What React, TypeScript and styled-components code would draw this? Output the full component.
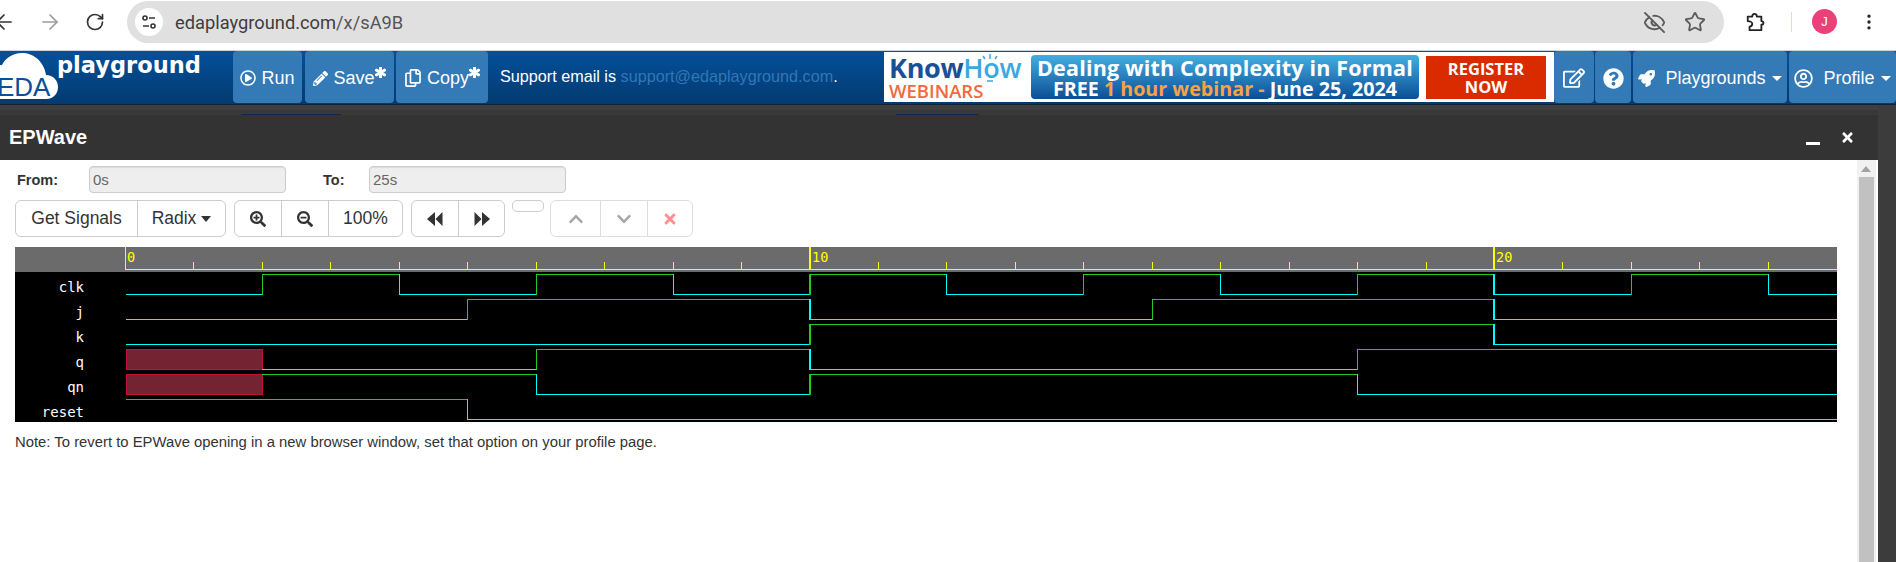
import styled, { createGlobalStyle } from "styled-components";
import { ArrowLeft, ArrowRight, RotateCw, Star, EyeOff, EllipsisVertical } from "lucide-react";
import {
  FaRegPlayCircle,
  FaPencilAlt,
  FaRegCopy,
  FaAsterisk,
  FaRegEdit,
  FaQuestionCircle,
  FaRocket,
  FaRegUserCircle,
  FaSearchPlus,
  FaSearchMinus,
  FaChevronUp,
  FaChevronDown,
  FaTimes,
} from "react-icons/fa";

const GlobalStyle = createGlobalStyle`
  html, body {
    margin: 0;
    height: 100%;
    overflow: hidden;
    background: #fff;
    font-family: "Liberation Sans", Arial, sans-serif;
  }
  #root {
    height: 100%;
  }
`;

const Page = styled.div`
  height: 100%;
  display: flex;
  flex-direction: column;
`;

/* browser chrome */
const BrowserBar = styled.div`
  height: 51px;
  flex: none;
  box-sizing: border-box;
  display: flex;
  align-items: flex-start;
  background: #fff;
  border-bottom: 1px solid #c9d3dc;
  color: #333;
`;

const NavIcon = styled.div<{ $left: number; $color?: string; $size?: number }>`
  margin: ${(p) => 22 - (p.$size || 20) / 2}px 0 0 ${(p) => p.$left}px;
  width: ${(p) => p.$size || 20}px;
  height: ${(p) => p.$size || 20}px;
  flex: none;
  color: ${(p) => p.$color || "#333"};
  svg {
    display: block;
    width: 100%;
    height: 100%;
  }
`;

const AddressBar = styled.div`
  width: 1597px;
  height: 42px;
  margin: 1px 0 0 22px;
  flex: none;
  display: flex;
  align-items: center;
  box-sizing: border-box;
  padding: 0 18px 0 8px;
  border-radius: 21px;
  background: #e0e0e0;
`;

const TuneBadge = styled.div`
  width: 28px;
  height: 28px;
  border-radius: 50%;
  background: #fff;
  display: flex;
  align-items: center;
  justify-content: center;
`;

const Url = styled.span`
  margin-left: 12px;
  font-family: "Roboto", "Liberation Sans", sans-serif;
  font-size: 18.3px;
  color: #3d3d3d;
  flex: 1;
  b {
    font-weight: 400;
    color: #555;
  }
`;

const BarAction = styled.div`
  margin-left: 18px;
  color: #5b5b5b;
  display: flex;
`;

const Divider = styled.div`
  width: 1px;
  height: 20px;
  margin: 12px 0 0 26px;
  background: #cfe8c9;
`;

const Avatar = styled.div`
  width: 25px;
  height: 25px;
  margin: 9px 0 0 20px;
  border-radius: 50%;
  background: #ec407a;
  color: #fff;
  font-size: 13px;
  display: flex;
  align-items: center;
  justify-content: center;
`;

/* site navbar */
const Navbar = styled.nav`
  height: 54px;
  flex: none;
  box-sizing: border-box;
  display: flex;
  align-items: stretch;
  padding-bottom: 1px;
  background: linear-gradient(#04509b, #033a6f);
  border-bottom: 1px solid #0b2438;
`;

const Logo = styled.svg`
  width: 233px;
  height: 52px;
  flex: none;
`;

const NavButton = styled.button<{ $w: number; $gap?: number }>`
  width: ${(p) => p.$w}px;
  margin-left: ${(p) => p.$gap || 0}px;
  flex: none;
  padding: 2px 0 0;
  border: none;
  border-radius: 4px;
  background: #337ab7;
  color: #fff;
  font-family: inherit;
  font-size: 18px;
  display: flex;
  align-items: center;
  justify-content: center;
  gap: 5px;
`;

const Star2 = styled(FaAsterisk)`
  width: 11px;
  height: 11px;
  margin: 0 0 12px -5px;
  stroke: currentColor;
  stroke-width: 50;
`;

const Caret = styled.span`
  width: 0;
  height: 0;
  margin-left: 1px;
  border-top: 5px solid #fff;
  border-left: 5px solid transparent;
  border-right: 5px solid transparent;
`;

const Support = styled.div`
  margin: 0 0 1px 12px;
  align-self: center;
  font-size: 16.2px;
  color: #fff;
  white-space: nowrap;
  a {
    color: #2f78b9;
    text-decoration: none;
  }
`;

const Banner = styled.div`
  width: 670px;
  margin: 1px 0 1px auto;
  flex: none;
  box-sizing: border-box;
  display: flex;
  align-items: center;
  padding-left: 5px;
  background: #fff;
  font-family: "Open Sans", "Liberation Sans", sans-serif;
`;

const KnowHow = styled.div`
  width: 142px;
  flex: none;
  position: relative;
`;

const KnowWord = styled.div`
  font-size: 27px;
  line-height: 27px;
  font-weight: 700;
  letter-spacing: -0.3px;
  color: #1b4f96;
  span {
    color: #3aa9dd;
    font-weight: 600;
  }
`;

const Rays = styled.svg`
  position: absolute;
  left: 91px;
  top: 0;
  width: 20px;
  height: 30px;
`;

const Webinars = styled.div`
  font-size: 18.5px;
  line-height: 20px;
  font-weight: 600;
  color: #f2693a;
`;

const BannerPanel = styled.div`
  width: 388px;
  height: 44px;
  flex: none;
  box-sizing: border-box;
  padding-top: 2px;
  border-radius: 4px;
  background: linear-gradient(#43aee0, #0c4e97);
  color: #fff;
  font-weight: 700;
  text-align: center;
  font-size: 21.5px;
  letter-spacing: 0.2px;
  line-height: 21px;
  white-space: nowrap;
  span {
    color: #f8a245;
  }
`;

const PanelSecond = styled.div`
  font-size: 19.7px;
  letter-spacing: 0;
`;

const RegisterBox = styled.div`
  width: 120px;
  height: 43px;
  margin-left: 7px;
  flex: none;
  box-sizing: border-box;
  padding-top: 2px;
  background: #d92a00;
  color: #fff;
  font-size: 16.5px;
  line-height: 18px;
  font-weight: 700;
  text-align: center;
  display: flex;
  flex-direction: column;
  justify-content: center;
`;

/* dark page behind the modal */
const Workspace = styled.div`
  flex: 1;
  min-height: 0;
  display: flex;
  background: #3c3c3c;
`;

const Modal = styled.div`
  width: 1878px;
  flex: none;
  display: flex;
  flex-direction: column;
`;

const BackStrip = styled.div`
  height: 10px;
  flex: none;
  box-sizing: border-box;
  display: flex;
  align-items: flex-end;
  background: linear-gradient(#3f3f3f, #3f3f3f 45%, #363636 50%, #3a3a3a);
`;

const BackTab = styled.div<{ $left: number; $w: number }>`
  width: ${(p) => p.$w}px;
  height: 1px;
  margin-left: ${(p) => p.$left}px;
  background: #0e2a48;
`;

const ModalHeader = styled.div`
  height: 45px;
  flex: none;
  display: flex;
  align-items: center;
  padding: 0 24px 0 9px;
  background: #333;
  color: #fff;
`;

const ModalTitle = styled.div`
  flex: 1;
  font-size: 20px;
  font-weight: 700;
`;

const MinimizeMark = styled.div`
  width: 14px;
  height: 3px;
  margin: 11px 21px 0 0;
  background: #fff;
`;

const CloseMark = styled(FaTimes)`
  width: 13px;
  height: 15px;
`;

const ModalBody = styled.div`
  flex: 1;
  min-height: 0;
  display: flex;
  background: #fff;
`;

const Content = styled.div`
  flex: 1;
  min-width: 0;
  box-sizing: border-box;
  padding: 6px 20px 0 15px;
`;

const Scrollbar = styled.div`
  width: 21px;
  flex: none;
  box-sizing: border-box;
  display: flex;
  flex-direction: column;
  padding-right: 2px;
  background: #f1f1f1;
  border-right: 2px solid #fff;
`;

const ScrollUp = styled.div`
  height: 17px;
  flex: none;
  display: flex;
  align-items: center;
  justify-content: center;
  &::before {
    content: "";
    border-bottom: 6px solid #a3a3a3;
    border-left: 5px solid transparent;
    border-right: 5px solid transparent;
  }
`;

const ScrollThumb = styled.div`
  flex: 1;
  margin-left: 2px;
  background: #c1c1c1;
`;

/* form */
const RangeRow = styled.div`
  display: flex;
  align-items: center;
  height: 27px;
`;

const RangeLabel = styled.label<{ $w: number; $left: number }>`
  width: ${(p) => p.$w}px;
  margin-left: ${(p) => p.$left}px;
  flex: none;
  font-size: 14.5px;
  font-weight: 700;
  color: #333;
`;

const RangeValue = styled.div`
  width: 197px;
  height: 27px;
  flex: none;
  box-sizing: border-box;
  padding: 0 3px;
  border: 1px solid #ccc;
  border-radius: 4px;
  background: #eee;
  color: #666;
  font-size: 15px;
  line-height: 25px;
  box-shadow: inset 0 1px 1px rgba(0, 0, 0, 0.08);
`;

const Toolbar = styled.div`
  display: flex;
  align-items: flex-start;
  margin-top: 7px;
  gap: 8px;
`;

const ToolGroup = styled.div<{ $disabled?: boolean }>`
  display: flex;
  height: 37px;
  box-sizing: border-box;
  border: 1px solid #ccc;
  border-radius: 6px;
  opacity: ${(p) => (p.$disabled ? 0.65 : 1)};
`;

const ToolButton = styled.button<{ $w: number; $color?: string }>`
  width: ${(p) => p.$w}px;
  flex: none;
  padding: 0;
  border: none;
  border-left: 1px solid #ccc;
  background: none;
  color: ${(p) => p.$color || "#333"};
  font-family: inherit;
  font-size: 17.5px;
  display: flex;
  align-items: center;
  justify-content: center;
  gap: 5px;
  &:first-child {
    border-left: none;
  }
`;

const EmptyButton = styled.div`
  width: 32px;
  height: 12px;
  margin: 0 -2px 0 -1px;
  box-sizing: border-box;
  border: 1px solid #ccc;
  border-radius: 5px;
`;

const RadixCaret = styled.span`
  width: 0;
  height: 0;
  border-top: 6px solid #333;
  border-left: 5px solid transparent;
  border-right: 5px solid transparent;
`;

const WaveCanvas = styled.svg`
  display: block;
  margin-top: 10px;
  width: 1822px;
  height: 175px;
`;

const Note = styled.p`
  margin: 10px 0 0;
  font-size: 14.85px;
  line-height: 20px;
  color: #333;
`;

/* wave data, one time unit = one tick */
const X0 = 110;
const UNIT = 68.45;
const END = 25;
const LOW = "#00ffff";
const HIGH = "#22cc22";

interface Signal {
  name: string;
  init: 0 | 1;
  edges: number[];
  unknownUntil?: number;
}

const SIGNALS: Signal[] = [
  { name: "clk", init: 0, edges: [2, 4, 6, 8, 10, 12, 14, 16, 18, 20, 22, 24] },
  { name: "j", init: 0, edges: [5, 10, 15, 20] },
  { name: "k", init: 0, edges: [10, 20] },
  { name: "q", init: 0, edges: [6, 10, 18], unknownUntil: 2 },
  { name: "qn", init: 1, edges: [6, 10, 18], unknownUntil: 2 },
  { name: "reset", init: 1, edges: [5] },
];

const tx = (t: number) => {
  if (t === 0) return X0 + 1;
  if (t === END) return 1822;
  return Math.round(X0 + t * UNIT);
};

function Wave({ signal, row }: { signal: Signal; row: number }) {
  const top = 27 + row * 25;
  const bottom = top + 20;
  const parts = [];
  let value = signal.init;
  let from = signal.unknownUntil || 0;
  const stops = [...signal.edges, END];
  stops.forEach((t, i) => {
    parts.push(
      <rect
        key={`h${i}`}
        x={tx(from)}
        y={value ? top : bottom}
        width={tx(t) - tx(from)}
        height={1}
        fill={value ? HIGH : LOW}
      />
    );
    if (t !== END) {
      value = value ? 0 : 1;
      const thick = t % 10 === 0;
      parts.push(
        <rect
          key={`v${i}`}
          x={tx(t) - (thick ? 1 : 0)}
          y={top}
          width={thick ? 2 : 1}
          height={21}
          fill={value ? HIGH : LOW}
        />
      );
      from = t;
    }
  });
  return (
    <g shapeRendering="crispEdges">
      {signal.unknownUntil && (
        <rect
          x={X0 + 1.5}
          y={top + 0.5}
          width={tx(signal.unknownUntil) - X0 - 1}
          height={20}
          fill="#742333"
          stroke="#c41230"
        />
      )}
      {parts}
      <text
        x={69}
        y={45 + row * 25}
        textAnchor="end"
        fontFamily="'DejaVu Sans Mono', monospace"
        fontSize={14}
        fill="#fff"
        shapeRendering="auto"
      >
        {signal.name}
      </text>
    </g>
  );
}

function Ruler() {
  const ticks = Array.from({ length: END }, (_, t) => t);
  return (
    <g shapeRendering="crispEdges" fill="#ffff00">
      <rect x={0} y={0} width={1822} height={25} fill="#6b6b6b" />
      <rect x={X0} y={22} width={1712} height={1} />
      {ticks.map((t) =>
        t % 10 === 0 ? (
          <rect key={t} x={t ? tx(t) - 1 : X0} y={0} width={t ? 2 : 1} height={23} />
        ) : (
          <rect key={t} x={tx(t)} y={15} width={1} height={7} />
        )
      )}
      {[0, 10, 20].map((t) => (
        <text
          key={t}
          x={(t ? tx(t) : X0) + 2}
          y={15}
          fontFamily="'DejaVu Sans Mono', monospace"
          fontSize={13.5}
          shapeRendering="auto"
        >
          {t}
        </text>
      ))}
    </g>
  );
}

function TuneIcon() {
  return (
    <svg width="16" height="16" viewBox="0 0 16 16" fill="none" stroke="#333" strokeWidth="1.6">
      <circle cx="4" cy="4" r="2" />
      <path d="M8 4h6M2 12h6" />
      <circle cx="12" cy="12" r="2" />
    </svg>
  );
}

function PuzzleIcon() {
  return (
    <svg viewBox="0 0 22 22" fill="none" stroke="#222" strokeWidth="2" strokeLinejoin="round">
      <path d="M3 5h5c0-4 5-4 5 0h5v5c3 0 3 4 0 4v6H5v-4c2 0 3-1 3-3s-3-3-5-3z" />
    </svg>
  );
}

function SkipIcon({ flip }: { flip?: boolean }) {
  return (
    <svg width="16" height="16" viewBox="0 0 16 16" fill="#333" transform={flip ? "scale(-1 1)" : undefined}>
      <path d="M8 1v14L0 8zM15.500 1v14L8.500 8z" />
    </svg>
  );
}

export default function App() {
  return (
    <Page>
      <GlobalStyle />
      <BrowserBar>
        <NavIcon $left={-8} $size={24}>
          <ArrowLeft strokeWidth={1.7} />
        </NavIcon>
        <NavIcon $left={22} $size={24} $color="#9a9a9a">
          <ArrowRight strokeWidth={1.7} />
        </NavIcon>
        <NavIcon $left={23}>
          <RotateCw />
        </NavIcon>
        <AddressBar>
          <TuneBadge>
            <TuneIcon />
          </TuneBadge>
          <Url>
            edaplayground.com<b>/x/sA9B</b>
          </Url>
          <BarAction>
            <EyeOff size={23} />
          </BarAction>
          <BarAction>
            <Star size={22} />
          </BarAction>
        </AddressBar>
        <NavIcon $left={21}>
          <PuzzleIcon />
        </NavIcon>
        <Divider />
        <Avatar>J</Avatar>
        <NavIcon $left={22} $color="#222">
          <EllipsisVertical />
        </NavIcon>
      </BrowserBar>

      <Navbar>
        <Logo viewBox="0 0 233 52">
          <path
            d="M-2 48H46C54 48 58 42 58 36C58 29 53 24 46 24C44 10 33 2 22 2C12 2 5 8 2 14L-2 14Z"
            fill="#fff"
          />
          <text x="-3" y="45" fontFamily="'Liberation Sans', sans-serif" fontSize="26" fill="#0a4f9a">
            EDA
          </text>
          <text x="57" y="22" fontFamily="'DejaVu Sans', sans-serif" fontSize="22.5" fontWeight="700" fill="#fff">
            playground
          </text>
        </Logo>
        <NavButton $w={69}>
          <FaRegPlayCircle size={16} />
          Run
        </NavButton>
        <NavButton $w={89} $gap={3}>
          <FaPencilAlt size={15} />
          Save
          <Star2 />
        </NavButton>
        <NavButton $w={92} $gap={2}>
          <FaRegCopy size={18} />
          Copy
          <Star2 />
        </NavButton>
        <Support>
          Support email is <a href="#support">support@edaplayground.com</a>.
        </Support>
        <Banner>
          <KnowHow>
            <KnowWord>
              Know<span>How</span>
            </KnowWord>
            <Rays viewBox="0 0 20 30" stroke="#3aa9dd" strokeWidth="1.5">
              <path d="M10 0v5M3 2l2 3M17 2l-2 3M7 27h6" />
            </Rays>
            <Webinars>WEBINARS</Webinars>
          </KnowHow>
          <BannerPanel>
            Dealing with Complexity in Formal
            <PanelSecond>
              FREE <span>1 hour webinar -</span> June 25, 2024
            </PanelSecond>
          </BannerPanel>
          <RegisterBox>
            REGISTER
            <br />
            NOW
          </RegisterBox>
        </Banner>
        <NavButton $w={40}>
          <FaRegEdit size={22} />
        </NavButton>
        <NavButton $w={36} $gap={1}>
          <FaQuestionCircle size={21} />
        </NavButton>
        <NavButton $w={154} $gap={2}>
          <FaRocket size={17} />
          <span>&nbsp;Playgrounds</span>
          <Caret />
        </NavButton>
        <NavButton $w={107} $gap={2}>
          <FaRegUserCircle size={19} />
          <span>&nbsp;Profile</span>
          <Caret />
        </NavButton>
      </Navbar>

      <Workspace>
        <Modal>
          <BackStrip>
            <BackTab $left={241} $w={100} />
            <BackTab $left={555} $w={83} />
          </BackStrip>
          <ModalHeader>
            <ModalTitle>EPWave</ModalTitle>
            <MinimizeMark />
            <CloseMark />
          </ModalHeader>
          <ModalBody>
            <Content>
              <RangeRow>
                <RangeLabel $w={72} $left={2}>
                  From:
                </RangeLabel>
                <RangeValue>0s</RangeValue>
                <RangeLabel $w={46} $left={37}>
                  To:
                </RangeLabel>
                <RangeValue>25s</RangeValue>
              </RangeRow>
              <Toolbar>
                <ToolGroup>
                  <ToolButton $w={121}>Get Signals</ToolButton>
                  <ToolButton $w={88}>
                    Radix
                    <RadixCaret />
                  </ToolButton>
                </ToolGroup>
                <ToolGroup>
                  <ToolButton $w={46}>
                    <FaSearchPlus size={16} />
                  </ToolButton>
                  <ToolButton $w={47}>
                    <FaSearchMinus size={16} />
                  </ToolButton>
                  <ToolButton $w={74}>100%</ToolButton>
                </ToolGroup>
                <ToolGroup>
                  <ToolButton $w={46}>
                    <SkipIcon />
                  </ToolButton>
                  <ToolButton $w={46}>
                    <SkipIcon flip />
                  </ToolButton>
                </ToolGroup>
                <EmptyButton />
                <ToolGroup $disabled>
                  <ToolButton $w={49} $color="#777">
                    <FaChevronUp size={16} />
                  </ToolButton>
                  <ToolButton $w={47} $color="#777">
                    <FaChevronDown size={16} />
                  </ToolButton>
                  <ToolButton $w={45} $color="#f55">
                    <FaTimes size={16} />
                  </ToolButton>
                </ToolGroup>
              </Toolbar>
              <WaveCanvas viewBox="0 0 1822 175">
                <rect x={0} y={0} width={1822} height={175} fill="#000" />
                <Ruler />
                {SIGNALS.map((s, i) => (
                  <Wave key={s.name} signal={s} row={i} />
                ))}
              </WaveCanvas>
              <Note>Note: To revert to EPWave opening in a new browser window, set that option on your profile page.</Note>
            </Content>
            <Scrollbar>
              <ScrollUp />
              <ScrollThumb />
            </Scrollbar>
          </ModalBody>
        </Modal>
      </Workspace>
    </Page>
  );
}
